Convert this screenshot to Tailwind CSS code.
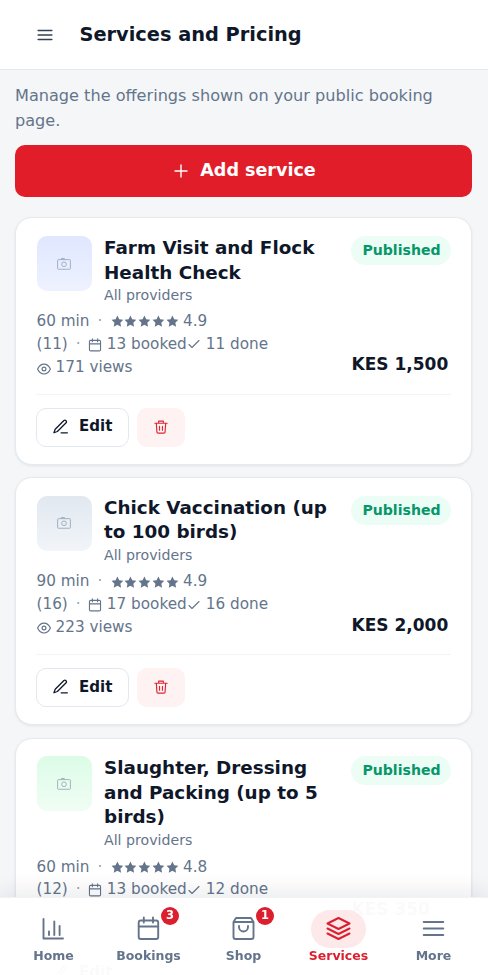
<!DOCTYPE html>
<html lang="en">
<head>
<meta charset="utf-8">
<title>Services and Pricing</title>
<script src="https://cdn.jsdelivr.net/npm/@tailwindcss/browser@4"></script>
</head>
<body class="h-[975px] overflow-hidden bg-[#f4f6f8] font-['DejaVu_Sans',sans-serif] text-[#0f172a]">
<svg class="hidden">
  <symbol id="star" viewBox="0 0 24 24"><path fill="currentColor" d="M12 1l3.400 7 7.600 1-5.500 5.400 1.400 7.800-6.900-3.800-6.900 3.800 1.400-7.800L1 9l7.600-1z"/></symbol>
  <symbol id="cal" viewBox="0 0 24 24"><g fill="none" stroke="currentColor" stroke-width="1.900" stroke-linecap="round"><rect x="2.500" y="4" width="19" height="18" rx="2"/><path d="M2.500 10h19M7.500 1.500v5M16.500 1.500v5"/></g></symbol>
  <symbol id="check" viewBox="0 0 24 24"><path fill="none" stroke="currentColor" stroke-width="2.200" stroke-linecap="round" stroke-linejoin="round" d="M2 13l6 6L22 5"/></symbol>
  <symbol id="eye" viewBox="0 0 24 24"><g fill="none" stroke="currentColor" stroke-width="2"><path d="M1 12s4-8.500 11-8.500S23 12 23 12s-4 8.500-11 8.500S1 12 1 12z"/><circle cx="12" cy="12" r="3.300"/></g></symbol>
  <symbol id="cam" viewBox="0 0 24 24"><g fill="none" stroke="currentColor" stroke-width="1.400"><rect x="1" y="4.500" width="22" height="16.500" rx="1.500"/><circle cx="12" cy="12.500" r="4"/><path d="M7.500 4.500V2.500h5V4.500"/></g></symbol>
  <symbol id="pen" viewBox="0 0 24 24"><path fill="none" stroke="currentColor" stroke-width="2" stroke-linecap="round" stroke-linejoin="round" d="M13 22h10M17.500 2.500a2.500 2.500 0 013.500 3.500L7 20l-5.500 2L3.500 16.500z"/></symbol>
  <symbol id="trash" viewBox="0 0 24 24"><path fill="none" stroke="currentColor" stroke-width="2" stroke-linecap="round" stroke-linejoin="round" d="M1.500 5.500h21M4 5.500l1 15a2 2 0 002 2h10a2 2 0 002-2l1-15M8 5.500V2h8v3.500M9.500 11v6.500M14.500 11v6.500"/></symbol>
</svg>

<header class="flex h-[69.500px] items-center border-b border-[#e2e8f0] bg-white pl-[37px]">
  <svg class="mt-[1px] h-[12px] w-[16px]" viewBox="0 0 16 12" fill="none" stroke="#334155" stroke-width="1.600" stroke-linecap="round"><path d="M1.200 1.500h13.600M1.200 6h13.600M1.200 10.500h13.600"/></svg>
  <h1 class="mt-[1.500px] ml-[26.500px] text-[19.350px] font-bold leading-6">Services and Pricing</h1>
</header>

<main class="px-[15px] pt-[13.500px]">
  <p class="text-[16.120px] leading-[25px] text-[#64748b]">Manage the offerings shown on your public booking page.</p>
  <button class="mt-[12.100px] flex h-[52px] w-[457px] items-center justify-center gap-[12px] rounded-[10px] bg-[#e11d2a] pb-[1px] pl-[3px] text-[17.550px] font-bold text-white">
    <svg class="mt-[1px] size-[14px]" viewBox="0 0 14 14" stroke="white" stroke-width="1.400" stroke-linecap="round"><path d="M7 1v12M1 7h12"/></svg>Add service
  </button>

  <div class="mt-[20px] flex w-[457px] flex-col gap-[12.800px]">
    <article class="rounded-[17px] border border-[#e6eaef] bg-white px-[20px] pt-[18px] pb-[17px] shadow-[0_1px_3px_rgba(15,23,42,0.08)]">
      <div class="flex items-start">
        <div class="ml-[0.500px] flex size-[55px] shrink-0 items-center justify-center rounded-[10px] bg-linear-to-b from-[#e0e7ff] to-[#eef2ff] text-[#94a3b8]"><svg class="size-[14px]"><use href="#cam"/></svg></div>
        <div class="ml-[12.500px] grow">
          <h2 class="text-[18.350px] font-bold leading-[24.400px]">Farm Visit and Flock<br>Health Check</h2>
          <p class="text-[14.150px] leading-[21px] text-[#64748b]">All providers</p>
        </div>
        <span class="flex h-[29px] w-[100px] items-center justify-center rounded-full bg-[#ecfdf5] pl-[1px] text-[14.100px] font-bold text-[#059669]">Published</span>
      </div>
      <div class="mt-[4px] flex items-end justify-between text-[15.250px] leading-[22.900px] text-[#64748b]">
        <div class="pl-[0.500px]">
          <div class="flex items-center">60 min<span class="ml-[8px] w-[13px] text-[#94a3b8]">·</span><span class="flex gap-[1px] pt-[1px]"><svg class="size-[12.800px]"><use href="#star"/></svg><svg class="size-[12.800px]"><use href="#star"/></svg><svg class="size-[12.800px]"><use href="#star"/></svg><svg class="size-[12.800px]"><use href="#star"/></svg><svg class="size-[12.800px]"><use href="#star"/></svg></span><span class="ml-[4.500px]">4.9</span></div>
          <div class="flex items-center">(11)<span class="ml-[8px] w-[12px] text-[#94a3b8]">·</span><svg class="mt-[1px] mr-[5px] size-[14px]"><use href="#cal"/></svg>13 booked<svg class="mr-[6px] ml-[1px] size-[12px]"><use href="#check"/></svg>11 done</div>
          <div class="flex items-center"><svg class="mt-[3px] mr-[5px] size-[14px]"><use href="#eye"/></svg>171 views</div>
        </div>
        <div class="w-[99.500px] pb-[2px] text-[17px] font-bold leading-[26px] whitespace-nowrap text-[#0f172a]">KES 1,500</div>
      </div>
      <div class="mt-[15.200px] flex gap-[8px] border-t border-[#f1f5f9] pt-[13px]">
        <button class="flex h-[38.700px] w-[92.500px] items-center justify-center gap-[11px] rounded-[10px] border border-[#e2e8f0] pb-[1px] pl-[1px] text-[15px] font-bold"><svg class="size-[15px]"><use href="#pen"/></svg>Edit</button>
        <button class="flex h-[38.700px] w-[48px] items-center justify-center rounded-[10px] bg-[#fef2f2] text-[#dc2631]"><svg class="size-[14px]"><use href="#trash"/></svg></button>
      </div>
    </article>

    <article class="rounded-[17px] border border-[#e6eaef] bg-white px-[20px] pt-[17.400px] pb-[17.600px] shadow-[0_1px_3px_rgba(15,23,42,0.08)]">
      <div class="flex items-start">
        <div class="ml-[0.500px] flex size-[55px] shrink-0 items-center justify-center rounded-[10px] bg-linear-to-b from-[#e2e8f0] to-[#f1f5f9] text-[#94a3b8]"><svg class="size-[14px]"><use href="#cam"/></svg></div>
        <div class="ml-[12.500px] grow">
          <h2 class="text-[18.350px] font-bold leading-[24.400px]">Chick Vaccination (up<br>to 100 birds)</h2>
          <p class="text-[14.150px] leading-[21px] text-[#64748b]">All providers</p>
        </div>
        <span class="flex h-[29px] w-[100px] items-center justify-center rounded-full bg-[#ecfdf5] pl-[1px] text-[14.100px] font-bold text-[#059669]">Published</span>
      </div>
      <div class="mt-[4.300px] flex items-end justify-between text-[15.250px] leading-[23.200px] text-[#64748b]">
        <div class="pl-[0.500px]">
          <div class="flex items-center">90 min<span class="ml-[8px] w-[13px] text-[#94a3b8]">·</span><span class="flex gap-[1px] pt-[1px]"><svg class="size-[12.800px]"><use href="#star"/></svg><svg class="size-[12.800px]"><use href="#star"/></svg><svg class="size-[12.800px]"><use href="#star"/></svg><svg class="size-[12.800px]"><use href="#star"/></svg><svg class="size-[12.800px]"><use href="#star"/></svg></span><span class="ml-[4.500px]">4.9</span></div>
          <div class="flex items-center">(16)<span class="ml-[8px] w-[12px] text-[#94a3b8]">·</span><svg class="mt-[1px] mr-[5px] size-[14px]"><use href="#cal"/></svg>17 booked<svg class="mr-[6px] ml-[1px] size-[12px]"><use href="#check"/></svg>16 done</div>
          <div class="flex items-center"><svg class="mt-[1px] mr-[5px] size-[14px]"><use href="#eye"/></svg>223 views</div>
        </div>
        <div class="w-[99.500px] pb-[1.500px] text-[17px] font-bold leading-[26px] whitespace-nowrap text-[#0f172a]">KES 2,000</div>
      </div>
      <div class="mt-[14.500px] flex gap-[8px] border-t border-[#f1f5f9] pt-[13px]">
        <button class="flex h-[38.700px] w-[92.500px] items-center justify-center gap-[11px] rounded-[10px] border border-[#e2e8f0] pl-[1px] text-[15px] font-bold"><svg class="mb-[1px] size-[15px]"><use href="#pen"/></svg>Edit</button>
        <button class="flex h-[38.700px] w-[48px] items-center justify-center rounded-[10px] bg-[#fef2f2] text-[#dc2631]"><svg class="mb-[1px] size-[14px]"><use href="#trash"/></svg></button>
      </div>
    </article>

    <article class="rounded-[17px] border border-[#e6eaef] bg-white px-[20px] pt-[17.400px] pb-[17.800px] shadow-[0_1px_3px_rgba(15,23,42,0.08)]">
      <div class="flex items-start">
        <div class="ml-[0.500px] flex size-[55px] shrink-0 items-center justify-center rounded-[10px] bg-linear-to-b from-[#dcfce7] to-[#f0fdf4] text-[#94a3b8]"><svg class="size-[14px]"><use href="#cam"/></svg></div>
        <div class="ml-[12.500px] grow">
          <h2 class="text-[18.350px] font-bold leading-[24.400px]">Slaughter, Dressing<br>and Packing (up to 5<br>birds)</h2>
          <p class="text-[14.150px] leading-[21px] text-[#64748b]">All providers</p>
        </div>
        <span class="flex h-[29px] w-[100px] items-center justify-center rounded-full bg-[#ecfdf5] pl-[1px] text-[14.100px] font-bold text-[#059669]">Published</span>
      </div>
      <div class="mt-[5px] flex items-end justify-between text-[15.250px] leading-[22.700px] text-[#64748b]">
        <div class="pl-[0.500px]">
          <div class="flex items-center">60 min<span class="ml-[8px] w-[13px] text-[#94a3b8]">·</span><span class="flex gap-[1px] pt-[1px]"><svg class="size-[12.800px]"><use href="#star"/></svg><svg class="size-[12.800px]"><use href="#star"/></svg><svg class="size-[12.800px]"><use href="#star"/></svg><svg class="size-[12.800px]"><use href="#star"/></svg><svg class="size-[12.800px]"><use href="#star"/></svg></span><span class="ml-[4.500px]">4.8</span></div>
          <div class="flex items-center">(12)<span class="ml-[8px] w-[12px] text-[#94a3b8]">·</span><svg class="mt-[1px] mr-[5px] size-[14px]"><use href="#cal"/></svg>13 booked<svg class="mr-[6px] ml-[1px] size-[12px]"><use href="#check"/></svg>12 done</div>
          <div class="h-[23px]"></div>
        </div>
        <div class="w-[99.500px] pb-[2px] text-[17px] font-bold leading-[26px] whitespace-nowrap text-[#0f172a]">KES 350</div>
      </div>
      <div class="mt-[15.200px] flex gap-[8px] border-t border-[#f1f5f9] pt-[13px]">
        <button class="flex h-[38.700px] w-[92.500px] items-center justify-center gap-[11px] rounded-[10px] border border-[#e2e8f0] pl-[1px] text-[15px] font-bold"><svg class="size-[15px]"><use href="#pen"/></svg>Edit</button>
      </div>
    </article>
  </div>
</main>

<nav class="fixed inset-x-0 bottom-0 grid h-[78.500px] grid-cols-5 border-t border-[#f1f3f5] bg-white/98 pr-[7px] pl-[6px] pt-[12px] text-[12.500px] font-bold text-[#64748b] shadow-[0_-5px_22px_rgba(15,23,42,0.09)]">
  <div class="flex flex-col items-center">
    <div class="flex h-[38px] w-[55px] items-center justify-center"><svg class="size-[25px]" viewBox="0 0 25 25" fill="none" stroke="currentColor" stroke-width="1.900" stroke-linecap="round" stroke-linejoin="round"><path d="M2.500 3v19.500H22M8 15.500v3.500M13.300 5.500V19M18.600 10v9"/></svg></div>
    <span class="mt-[-1px] leading-[18px]">Home</span>
  </div>
  <div class="flex flex-col items-center">
    <div class="relative flex h-[38px] w-[55px] items-center justify-center"><svg class="size-[25px]" viewBox="0 0 25 25" fill="none" stroke="currentColor" stroke-width="1.900" stroke-linecap="round"><rect x="2.700" y="4.500" width="19.500" height="18.500" rx="2"/><path d="M2.700 10.500h19.500M7.800 1.500v5M17 1.500v5"/></svg>
      <span class="absolute top-[-2.500px] right-[-3px] flex size-[18px] items-center justify-center rounded-full bg-[#dc1f2e] text-[11.500px] text-white">3</span></div>
    <span class="mt-[-1px] leading-[18px]">Bookings</span>
  </div>
  <div class="flex flex-col items-center">
    <div class="relative flex h-[38px] w-[55px] items-center justify-center"><svg class="size-[25px]" viewBox="0 0 25 25" fill="none" stroke="currentColor" stroke-width="1.900" stroke-linecap="round" stroke-linejoin="round"><path d="M2.500 6L5 2h15l2.500 4v15a2 2 0 01-2 2h-16a2 2 0 01-2-2zM2.500 6h20M8 10v1a4.500 4.500 0 009 0v-1"/></svg>
      <span class="absolute top-[-2.500px] right-[-3px] flex size-[18px] items-center justify-center rounded-full bg-[#dc1f2e] text-[11.500px] text-white">1</span></div>
    <span class="mt-[-1px] leading-[18px]">Shop</span>
  </div>
  <div class="flex flex-col items-center text-[#dc1f2e]">
    <div class="flex h-[38px] w-[55px] items-center justify-center rounded-full bg-[#fde8ea]"><svg class="size-[25px]" viewBox="0 0 25 25" fill="none" stroke="currentColor" stroke-width="2" stroke-linecap="round" stroke-linejoin="round"><path d="M12.500 2L23.500 7.500 12.500 13 1.500 7.500zM1.500 12.500l11 5.500 11-5.500M1.500 17.500l11 5.500 11-5.500"/></svg></div>
    <span class="mt-[-1px] leading-[18px]">Services</span>
  </div>
  <div class="flex flex-col items-center">
    <div class="flex h-[38px] w-[55px] items-center justify-center"><svg class="size-[25px]" viewBox="0 0 25 25" fill="none" stroke="currentColor" stroke-width="1.900" stroke-linecap="round"><path d="M2.700 6h19.600M2.700 12.500h19.600M2.700 19h19.600"/></svg></div>
    <span class="mt-[-1px] leading-[18px]">More</span>
  </div>
</nav>
</body>
</html>
